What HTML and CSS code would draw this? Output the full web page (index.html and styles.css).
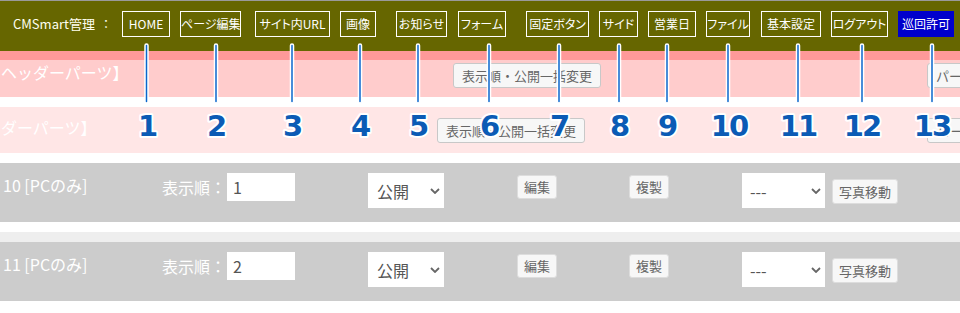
FILE: index.html
```html
<!DOCTYPE html>
<html lang="ja">
<head>
<meta charset="utf-8">
<title>CMSmart管理</title>
<link rel="stylesheet" href="styles.css">
</head>
<body>
<div class="page">
  <header class="topbar">
    <span class="brand">CMSmart管理</span>
    <span class="sep">：</span>
    <nav class="menu">
      <a class="menu-item">HOME</a>
      <a class="menu-item">ページ編集</a>
      <a class="menu-item">サイト内URL</a>
      <a class="menu-item">画像</a>
      <a class="menu-item">お知らせ</a>
      <a class="menu-item">フォーム</a>
      <a class="menu-item">固定ボタン</a>
      <a class="menu-item">サイド</a>
      <a class="menu-item">営業日</a>
      <a class="menu-item">ファイル</a>
      <a class="menu-item">基本設定</a>
      <a class="menu-item">ログアウト</a>
      <a class="menu-item menu-item--active">巡回許可</a>
    </nav>
  </header>
  <div class="accent"></div>

  <section class="parts parts--header">
    <div class="parts-title">ヘッダーパーツ】</div>
    <div><button class="btn">表示順・公開一括変更</button></div>
    <div><button class="btn">パーツ追加</button></div>
  </section>
  <div class="spacer"></div>
  <section class="parts parts--footer">
    <div class="parts-title">ダーパーツ】</div>
    <div><button class="btn">表示順・公開一括変更</button></div>
    <div><button class="btn">パーツ追加</button></div>
  </section>
  <div class="spacer"></div>

  <div class="item-row">
    <div class="item-name">10 [PCのみ]</div>
    <div class="order"><span class="order-label">表示順：</span><input class="order-input" type="text" value="1"></div>
    <div><span class="select select--status"><select><option>公開</option></select><svg class="select-arrow" viewBox="0 0 10 6"><path d="M1 1 L5 5 L9 1" fill="none" stroke="#666" stroke-width="1.8"/></svg></span></div>
    <div><button class="btn btn-sm">編集</button></div>
    <div><button class="btn btn-sm">複製</button></div>
    <div class="move"><span class="select select--move"><select><option>---</option></select><svg class="select-arrow" viewBox="0 0 10 6"><path d="M1 1 L5 5 L9 1" fill="none" stroke="#666" stroke-width="1.8"/></svg></span><button class="btn btn-move">写真移動</button></div>
  </div>
  <div class="spacer"></div>
  <div class="spacer spacer--grey"></div>
  <div class="item-row">
    <div class="item-name">11 [PCのみ]</div>
    <div class="order"><span class="order-label">表示順：</span><input class="order-input" type="text" value="2"></div>
    <div><span class="select select--status"><select><option>公開</option></select><svg class="select-arrow" viewBox="0 0 10 6"><path d="M1 1 L5 5 L9 1" fill="none" stroke="#666" stroke-width="1.8"/></svg></span></div>
    <div><button class="btn btn-sm">編集</button></div>
    <div><button class="btn btn-sm">複製</button></div>
    <div class="move"><span class="select select--move"><select><option>---</option></select><svg class="select-arrow" viewBox="0 0 10 6"><path d="M1 1 L5 5 L9 1" fill="none" stroke="#666" stroke-width="1.8"/></svg></span><button class="btn btn-move">写真移動</button></div>
  </div>

  <svg class="annotations" width="960" height="313" viewBox="0 0 960 313">
    <g class="mark-lines">
      <rect x="145" y="44" width="3" height="59" rx="1.5"/>
      <rect x="214.5" y="44" width="3" height="59" rx="1.5"/>
      <rect x="290.5" y="44" width="3" height="59" rx="1.5"/>
      <rect x="358.5" y="44" width="3" height="59" rx="1.5"/>
      <rect x="416.5" y="44" width="3" height="59" rx="1.5"/>
      <rect x="487.5" y="44" width="3" height="59" rx="1.5"/>
      <rect x="557.5" y="44" width="3" height="59" rx="1.5"/>
      <rect x="617.5" y="44" width="3" height="59" rx="1.5"/>
      <rect x="665.5" y="44" width="3" height="59" rx="1.5"/>
      <rect x="726.5" y="44" width="3" height="59" rx="1.5"/>
      <rect x="796.5" y="44" width="3" height="59" rx="1.5"/>
      <rect x="860.5" y="44" width="3" height="59" rx="1.5"/>
      <rect x="930.5" y="44" width="3" height="59" rx="1.5"/>
    </g>
    <g class="mark-nums">
      <text x="147" y="136">1</text>
      <text x="216" y="136">2</text>
      <text x="292" y="136">3</text>
      <text x="360" y="136">4</text>
      <text x="418" y="136">5</text>
      <text x="489" y="136">6</text>
      <text x="559" y="136">7</text>
      <text x="619" y="136">8</text>
      <text x="667" y="136">9</text>
      <text x="729" y="136">10</text>
      <text x="798" y="136">11</text>
      <text x="862" y="136">12</text>
      <text x="932" y="136">13</text>
    </g>
  </svg>
</div>
</body>
</html>
```
FILE: styles.css
```css
* { box-sizing: border-box; }
html, body { margin: 0; padding: 0; background: #fff; }
body {
  font-family: "Noto Sans CJK JP", "Noto Sans", sans-serif;
  overflow: hidden;
}
.page {
  position: relative;
  width: 960px;
  height: 313px;
  overflow: hidden;
}

/* top bar */
.topbar {
  display: grid;
  grid-template-columns: 100px 22px 1fr;
  height: 51px;
  background: #666600;
  border-top: 1px solid #9a9a9a;
  padding-top: 10px;
  color: #fff;
  font-size: 12px;
}
.brand {
  padding-left: 13px;
  line-height: 26px;
  font-size: 13px;
  white-space: nowrap;
  color: #fffff0;
}
.sep { line-height: 26px; font-size: 12px; color: #fffff0; }
.menu { display: flex; gap: 10px; }
.menu-item {
  display: block;
  height: 26px;
  border: 1px solid #fff;
  line-height: 24px;
  text-align: center;
  white-space: nowrap;
  color: #fff;
  text-decoration: none;
  font-feature-settings: "palt";
  overflow: hidden;
}
.menu-item:nth-child(1) { width: 48px; }
.menu-item:nth-child(2) { width: 61px; }
.menu-item:nth-child(3) { width: 75px; margin-left: 4px; }
.menu-item:nth-child(4) { width: 36px; }
.menu-item:nth-child(5) { width: 51px; margin-left: 10px; }
.menu-item:nth-child(6) { width: 48px; margin-left: 1px; }
.menu-item:nth-child(7) { width: 63px; margin-left: 10px; }
.menu-item:nth-child(8) { width: 39px; }
.menu-item:nth-child(9) { width: 48px; }
.menu-item:nth-child(10) { width: 44px; }
.menu-item:nth-child(11) { width: 60px; margin-left: 1px; }
.menu-item:nth-child(12) { width: 57px; }
.menu-item:nth-child(13) { width: 56px; }
.menu-item--active { background: #0000cc; border-color: #0000cc; }

.accent { height: 9px; background: #ff9999; }

/* parts sections */
.parts {
  display: grid;
  color: #fff;
  font-size: 16px;
}
.parts--header {
  grid-template-columns: 453px 474px 1fr;
  height: 37px;
  background: #ffcccc;
  padding-top: 2px;
}
.parts--footer {
  grid-template-columns: 437px 490px 1fr;
  height: 46px;
  background: #ffe6e6;
  padding-top: 10px;
}
.parts-title {
  line-height: 20px;
  padding-left: 1px;
  white-space: nowrap;
}

.btn {
  display: inline-block;
  font-family: "Noto Sans CJK JP", "Noto Sans", sans-serif;
  font-size: 13px;
  color: #666;
  background: #f7f7f7;
  border: 1px solid #c8c8c8;
  border-radius: 3px;
  padding: 0 8px;
  height: 25px;
  line-height: 23px;
  white-space: nowrap;
  margin: 0;
}

.spacer { height: 10px; }
.spacer--grey { background: #eeeeee; }

/* item rows */
.item-row {
  display: grid;
  grid-template-columns: 162px 206px 149px 112px 113px 1fr;
  align-items: start;
  height: 59px;
  background: #cccccc;
  padding-top: 10px;
}
.item-name {
  padding-left: 3px;
  line-height: 24px;
  color: #fff;
  font-size: 16px;
  white-space: nowrap;
}
.order { display: flex; }
.order-label {
  width: 65px;
  line-height: 28px;
  color: #fff;
  font-size: 16px;
  white-space: nowrap;
}
.order-input {
  width: 68px;
  height: 28px;
  border: 0;
  margin: 0;
  padding: 0 6px;
  font-family: "Noto Sans CJK JP", "Noto Sans", sans-serif;
  font-size: 16px;
  color: #555;
  background: #fff;
}
.select { position: relative; display: inline-block; vertical-align: top; }
.select select {
  display: block;
  -webkit-appearance: none;
  appearance: none;
  border: 0;
  border-radius: 0;
  margin: 0;
  background: #fff;
  height: 35px;
  padding: 0 0 0 9px;
  font-family: "Noto Sans CJK JP", "Noto Sans", sans-serif;
  font-size: 16px;
  color: #555;
}
.select--status select { width: 76px; }
.select--move select { width: 83px; padding-left: 8px; }
.select-arrow {
  position: absolute;
  right: 4px;
  top: 15px;
  width: 10px;
  height: 6px;
  pointer-events: none;
}
.btn-sm {
  padding: 0 6px;
  height: 24px;
  line-height: 22px;
  border-color: #dddddd;
  margin-top: 1px;
}
.move { display: flex; gap: 7px; align-items: flex-start; }
.btn-move {
  padding: 0 6px;
  margin-top: 6px;
  border-color: #dddddd;
}

/* annotation overlay */
.annotations {
  position: absolute;
  left: 0;
  top: 0;
  pointer-events: none;
}
.mark-lines rect {
  fill: #0a66cc;
  stroke: #fff;
  stroke-width: 1.5px;
}
.mark-nums text {
  font-family: "DejaVu Sans", sans-serif;
  font-weight: bold;
  font-size: 29px;
  letter-spacing: -2px;
  fill: #0b5bb5;
  stroke: #fff;
  stroke-width: 4px;
  stroke-linejoin: round;
  paint-order: stroke;
  text-anchor: middle;
}
```
